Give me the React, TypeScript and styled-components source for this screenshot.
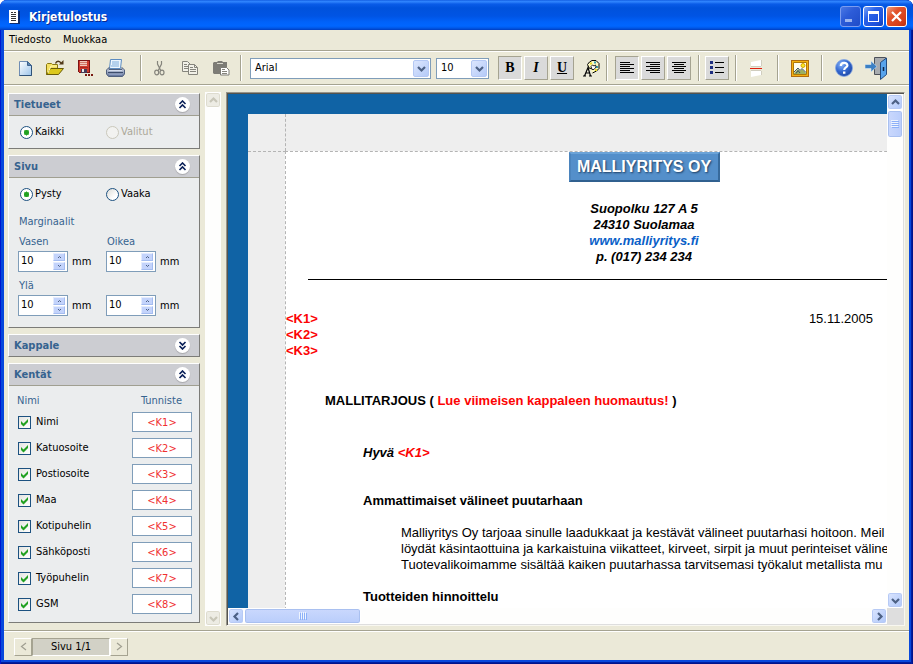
import React from "react";
import styled, { createGlobalStyle, css } from "styled-components";

const uiFont = `"DejaVu Sans Condensed", "Noto Sans", sans-serif`;
const docFont = `"Liberation Sans", Arial, sans-serif`;

const GlobalStyle = createGlobalStyle`
  * { box-sizing: border-box; }
  html, body { margin: 0; height: 100%; background: #fff; }
  body { font: 11px/16px ${uiFont}; color: #000; }
  button, input, select { font: inherit; color: inherit; margin: 0; }
  button { padding: 0; border: 0; background: none; }
  svg { display: block; flex: none; }
`;

/* ---------- window frame ---------- */

const Window = styled.div`
  display: flex;
  flex-direction: column;
  height: 100vh;
  overflow: hidden;
  background: #0848dc;
  border-radius: 7px 7px 0 0;
  box-shadow: inset 1px 0 #0019cf, inset -1px 0 #00138c, inset -2px 0 #001ea0, inset 0 -1px #00138c, inset 0 -2px #001ea0;
`;

const TitleBar = styled.header`
  display: flex;
  align-items: center;
  flex: none;
  height: 30px;
  padding: 3px 6px 0 8px;
  gap: 2px;
  background: linear-gradient(
    #0a50d8 0, #2f86ff 1px, #2c7ffa 2px, #0a5ce8 4px, #0052dc 8px,
    #0054e4 16px, #0062fa 22px, #0066ff 26px, #0058e8 28px, #003dc0 30px
  );
`;

const Title = styled.h1`
  flex: 1;
  margin: 0 0 0 7px;
  font: bold 12px/16px ${uiFont};
  color: #fff;
  text-shadow: 1px 1px #0a2a90;
`;

const CaptionButton = styled.button<{ $tone: "dim" | "blue" | "red" }>`
  display: grid;
  place-items: center;
  width: 21px;
  height: 21px;
  border: 1px solid ${p => (p.$tone === "dim" ? "#7b9cf0" : "#fff")};
  border-radius: 3px;
  background: ${p =>
    p.$tone === "red"
      ? "linear-gradient(135deg, #f0a080 0, #e2532c 35%, #d8401a 75%, #b83010)"
      : p.$tone === "blue"
      ? "linear-gradient(135deg, #7aa4f8 0, #2a62e8 35%, #1d52dc 75%, #1040b8)"
      : "linear-gradient(135deg, #4a78e4 0, #2d5cd8 40%, #1e4cc8)"};
`;

const Client = styled.div`
  display: flex;
  flex-direction: column;
  flex: 1;
  min-height: 0;
  margin: 0 4px 4px;
  background: #ebe9d8;
`;

const MenuBar = styled.nav`
  display: flex;
  flex: none;
  height: 21px;
  padding: 1px 5px 0;
  gap: 12px;
  border-bottom: 1px solid #a5a391;
`;

const MenuItem = styled.button`
  height: 17px;
`;

/* ---------- toolbar ---------- */

const Toolbar = styled.div`
  display: flex;
  align-items: center;
  flex: none;
  height: 34px;
  padding-left: 6px;
  border-top: 1px solid #fff;
  border-bottom: 1px solid #a5a391;
`;

const Group = styled.div<{ $gap?: number; $before?: number; $after?: number }>`
  display: flex;
  align-items: center;
  gap: ${p => p.$gap ?? 0}px;
  padding: 0 ${p => p.$after ?? 0}px 0 ${p => p.$before ?? 0}px;
`;

const Separator = styled.span`
  flex: none;
  width: 2px;
  height: 26px;
  border-left: 1px solid #a5a391;
  border-right: 1px solid #fff;
`;

const IconButton = styled.button`
  display: grid;
  place-items: center;
  flex: none;
  width: 30px;
  height: 24px;
`;

const ToggleButton = styled.button<{ $on?: boolean }>`
  display: grid;
  place-items: center;
  flex: none;
  width: 24px;
  height: 24px;
  background: #dadada;
  border: 1px solid;
  border-color: ${p => (p.$on ? "#a5a391 #fff #fff #a5a391" : "#fff #a5a391 #a5a391 #fff")};
  font: bold 14px/16px "Liberation Serif", serif;
`;

const SelectBox = styled.span<{ $width: number }>`
  display: grid;
  grid-template-columns: 1fr 17px;
  align-items: center;
  flex: none;
  width: ${p => p.$width}px;
  height: 21px;
  background: #fff;
  border: 1px solid #7f9db9;
`;

const Select = styled.select`
  grid-area: 1 / 1 / 2 / 3;
  width: 100%;
  height: 19px;
  padding: 0 4px;
  border: 0;
  appearance: none;
  background: none;
`;

const SelectArrow = styled.span`
  grid-area: 1 / 2;
  display: grid;
  place-items: center;
  width: 16px;
  height: 17px;
  border: 1px solid #b4c8f4;
  border-radius: 2px;
  background: linear-gradient(135deg, #dce6fe, #b4caf8);
  pointer-events: none;
`;

/* ---------- work area ---------- */

const WorkArea = styled.main`
  display: flex;
  flex: 1;
  min-height: 0;
  padding: 7px 4px 4px;
  border-top: 1px solid #fff;
`;

const Sidebar = styled.aside`
  display: flex;
  flex-direction: column;
  flex: none;
  width: 192px;
  gap: 6px;
`;

const Panel = styled.section`
  flex: none;
  border: 1px solid;
  border-color: #fff #7c7c78 #7c7c78 #fff;
  background: #ebedee;
`;

const PanelHead = styled.h2<{ $open: boolean }>`
  display: flex;
  align-items: center;
  justify-content: space-between;
  height: ${p => (p.$open ? 22 : 21)}px;
  margin: 0;
  padding: 0 9px 0 5px;
  background: #cccdd2;
  ${p => p.$open && css`border-bottom: 1px solid #a09f91;`}
  font: bold 11px/16px ${uiFont};
  color: #36638f;
`;

const RoundButton = styled.button`
  display: grid;
  place-items: center;
  width: 15px;
  height: 15px;
  border-radius: 50%;
  background: #fff;
  box-shadow: 0 1px 1px #a8a8ac;
`;

const RadioRow = styled.div`
  display: grid;
  grid-template-columns: 86px 1fr;
  align-items: center;
  height: 32px;
  padding-left: 11px;
`;

const RadioLabel = styled.label<{ $disabled?: boolean }>`
  display: flex;
  align-items: center;
  gap: 2px;
  color: ${p => (p.$disabled ? "#aca899" : "#000")};
`;

const Radio = styled.input`
  appearance: none;
  width: 13px;
  height: 13px;
  border: 1px solid #1c5180;
  border-radius: 50%;
  background: linear-gradient(135deg, #dcdcd7, #fff 70%);
  &:checked { background: radial-gradient(circle, #21a121 0 2px, #8fd48f 3px, #fff 3px); }
  &:disabled { border-color: #cac8bb; background: #f2f2f0; }
`;

const Margins = styled.fieldset`
  display: grid;
  grid-template-columns: 88px 1fr;
  row-gap: 1px;
  margin: 0;
  padding: 0 0 6px 9px;
  border: 0;
  color: #36638f;
`;

const Legend = styled.legend`
  padding: 4px 0 0 1px;
  height: 24px;
`;

const Field = styled.label`
  display: flex;
  flex-direction: column;
  height: 43px;
`;

const FieldCaption = styled.span`
  height: 17px;
  padding-left: 1px;
`;

const FieldLine = styled.span`
  display: flex;
  align-items: center;
  gap: 4px;
  color: #000;
`;

const SpinBox = styled.span`
  display: flex;
  align-items: center;
  width: 50px;
  height: 21px;
  padding-right: 2px;
  background: #fff;
  border: 1px solid #7f9db9;
`;

const SpinInput = styled.input`
  flex: 1;
  min-width: 0;
  height: 19px;
  padding: 0 0 2px 2px;
  border: 0;
  background: none;
`;

const SpinButtons = styled.span`
  display: flex;
  flex-direction: column;
  gap: 1px;
`;

const SpinButton = styled.button`
  display: grid;
  place-items: center;
  width: 12px;
  height: 8px;
  background: #c3d3fb;
  border: 1px solid;
  border-color: #e4ecfe #a4bcf0 #a4bcf0 #e4ecfe;
`;

const FieldTable = styled.table`
  width: 100%;
  border-collapse: collapse;
  margin: 6px 0 5px;
  th, td { padding: 0 7px 0 9px; height: 26px; text-align: left; font-weight: normal; }
  th { height: 17px; padding-left: 8px; color: #36638f; }
  th + th { padding: 0 17px 0 0; text-align: right; }
  td + td { width: 67px; padding-left: 0; }
`;

const CheckLabel = styled.label`
  display: flex;
  align-items: center;
  gap: 5px;
`;

const CheckCell = styled.span`
  display: grid;
  place-items: center;
  > * { grid-area: 1 / 1; }
  svg { pointer-events: none; }
`;

const CheckBox = styled.input`
  appearance: none;
  width: 13px;
  height: 13px;
  background: linear-gradient(135deg, #e4e4e0, #fff);
  border: 1px solid #1c5180;
  &:not(:checked) + svg { visibility: hidden; }
`;

const CodeInput = styled.input`
  display: block;
  width: 60px;
  height: 20px;
  padding: 0;
  border: 1px solid #7f9db9;
  background: #fff;
  text-align: center;
  color: #f03030;
`;

/* ---------- scroll bars ---------- */

const ScrollBar = styled.div<{ $dir: "column" | "row" }>`
  display: flex;
  flex-direction: ${p => p.$dir};
  flex: none;
  ${p => (p.$dir === "column" ? "width: 16px;" : "height: 16px;")}
  background: #fefefd;
`;

const ScrollButton = styled.button`
  display: grid;
  place-items: center;
  flex: none;
  width: 16px;
  height: 16px;
  border: 1px solid #fff;
  border-radius: 3px;
  background: linear-gradient(135deg, #dbe5fe, #b0c8fa);
  box-shadow: inset 0 0 0 1px #b7caf5;
  &:disabled { background: #edece4; box-shadow: inset 0 0 0 1px #dedccf; }
`;

const Thumb = styled.div<{ $dir: "column" | "row" }>`
  display: grid;
  place-items: center;
  flex: none;
  ${p => (p.$dir === "column" ? "height: 28px;" : "width: 117px;")}
  border: 1px solid #fff;
  border-radius: 3px;
  background: linear-gradient(${p => (p.$dir === "column" ? "90deg" : "180deg")}, #cad8fd, #b9cdfb);
  box-shadow: inset 0 0 0 1px #a9c0f0;
`;

const Spacer = styled.span`
  flex: 1;
`;

const SideScroll = styled(ScrollBar)`
  margin: -1px 5px 0;
`;

/* ---------- letter preview ---------- */

const Preview = styled.div`
  display: grid;
  grid-template: minmax(0, 1fr) 16px / minmax(0, 1fr) 16px;
  flex: 1;
  min-width: 0;
  margin-top: -1px;
  padding: 1px;
  border: 1px solid;
  border-color: #96948a #f8f7f0 #f8f7f0 #96948a;
  background: #dedede;
  box-shadow: inset 1px 1px #55544e;
`;

const Canvas = styled.div`
  overflow: hidden;
  padding: 20px 0 0 20px;
  background: #1063a5;
`;

const Paper = styled.article`
  width: 794px;
  min-height: 1100px;
  padding: 37px 0 0 37px;
  background: linear-gradient(#eee, #eee);
  font: 13px/16px ${docFont};
`;

const PrintArea = styled.div`
  width: 717px;
  min-height: 1000px;
  background: #fff;
  border-top: 1px dashed #b4b4b4;
  border-left: 1px dashed #b4b4b4;
`;

const Guides = styled.div`
  display: grid;
  grid-template-columns: 37px 1fr;
  height: 37px;
  margin: -37px 0 0 -37px;
`;

const GuideMark = styled.span`
  border-right: 1px dashed #b4b4b4;
  margin-right: -1px;
`;

const GuideEdge = styled.div`
  width: 38px;
  height: 1px;
  margin: 0 0 -1px -37px;
  border-top: 1px dashed #b4b4b4;
`;

const Letterhead = styled.div`
  display: flex;
  flex-direction: column;
  align-items: center;
`;

const Logo = styled.div`
  margin-bottom: 19px;
  width: 151px;
  border: 2px solid;
  border-color: #6ba3d8 #376a9c #30608f #4b84bd;
  background: #548fca;
  font: bold 16px/26px ${docFont};
  text-align: center;
  white-space: nowrap;
  color: #fff;
  text-shadow: 1px 1px 2px #1c3c60;
`;

const Address = styled.address`
  font: italic bold 13px/16px ${docFont};
  text-align: center;
`;

const SiteLink = styled.a`
  color: #0a5fc8;
  text-decoration: none;
`;

const Rule = styled.hr`
  height: 1px;
  margin: 14px 0 31px 22px;
  border: 0;
  background: #000;
`;

const Recipient = styled.div`
  display: flex;
  justify-content: space-between;
  padding-right: 129px;
`;

const Red = styled.span`
  color: #fc0404;
  font-weight: bold;
`;

const Line = styled.p<{ $indent: number; $top: number; $bold?: boolean; $italic?: boolean }>`
  margin: ${p => p.$top}px 0 0 ${p => p.$indent * 38 + 1}px;
  white-space: nowrap;
  font-weight: ${p => (p.$bold ? "bold" : "normal")};
  font-style: ${p => (p.$italic ? "italic" : "normal")};
`;

/* ---------- status bar ---------- */

const StatusBar = styled.footer`
  display: flex;
  align-items: center;
  flex: none;
  height: 30px;
  padding: 2px 0 0 10px;
  border-top: 1px solid #a5a391;
  box-shadow: inset 0 1px #fff;
`;

const PageButton = styled.button`
  display: grid;
  place-items: center;
  width: 18px;
  height: 18px;
  border: 1px solid;
  border-color: #fff #a5a391 #a5a391 #fff;
`;

const PageLabel = styled.output`
  width: 78px;
  height: 18px;
  border: 1px solid;
  border-color: #a5a391 #fff #fff #a5a391;
  background: #d2d1c6;
  text-align: center;
`;

/* ---------- icons ---------- */

const Chevron = ({ dir, color = "#4d6185" }: { dir: "up" | "down" | "left" | "right"; color?: string }) => {
  const d = {
    up: "M1 6 4.500 2.500 8 6",
    down: "M1 3 4.500 6.500 8 3",
    left: "M6 1 2.500 4.500 6 8",
    right: "M3 1 6.500 4.500 3 8",
  }[dir];
  return (
    <svg width="9" height="9" viewBox="0 0 9 9" fill="none" stroke={color} strokeWidth="2.200">
      <path d={d} />
    </svg>
  );
};

const ThinChevron = ({ dir }: { dir: "left" | "right" }) => (
  <svg width="7" height="9" viewBox="0 0 7 9" fill="none" stroke="#a09f91" strokeWidth="1.200">
    <path d={dir === "left" ? "M6 1 1.500 4.500 6 8" : "M1 1 5.500 4.500 1 8"} />
  </svg>
);

const DoubleChevron = ({ up }: { up: boolean }) => (
  <svg width="9" height="9" viewBox="0 0 9 9" fill="none" stroke="#0a2058" strokeWidth="1.600">
    <path d={up ? "M1.500 4 4.500 1 7.500 4M1.500 8 4.500 5 7.500 8" : "M1.500 1 4.500 4 7.500 1M1.500 5 4.500 8 7.500 5"} />
  </svg>
);

const SpinArrow = ({ up }: { up: boolean }) => (
  <svg width="5" height="4" viewBox="0 0 5 4" fill="none" stroke="#4d6185">
    <path d={up ? "M1 3 2.500 1.500 4 3" : "M1 1 2.500 2.500 4 1"} />
  </svg>
);

const Tick = () => (
  <svg width="9" height="9" viewBox="0 0 9 9" fill="#21a121">
    <path d="M1 3v3l2.500 2.500L8 4V1L3.500 5.500z" />
  </svg>
);

const Grip = ({ vertical }: { vertical?: boolean }) => (
  <svg width="8" height="8" viewBox="0 0 8 8" shapeRendering="crispEdges">
    {[0, 2, 4, 6].map(n =>
      vertical ? (
        <g key={n}>
          <path d={`M0 ${n}h7v1H0z`} fill="#eef4fe" />
          <path d={`M1 ${n + 1}h7v1H1z`} fill="#8cb0f8" />
        </g>
      ) : (
        <g key={n}>
          <path d={`M${n} 0h1v7h-1z`} fill="#eef4fe" />
          <path d={`M${n + 1} 1h1v7h-1z`} fill="#8cb0f8" />
        </g>
      )
    )}
  </svg>
);

const AppIcon = () => (
  <svg width="12" height="14" viewBox="0 0 12 14" shapeRendering="crispEdges">
    <path d="M2 1h10v13H2z" fill="#0c2c70" />
    <path d="M1 0h9v13H1z" fill="#fff" />
    <path d="M3 2h2v1H3zM6 2h2v1H6zM3 4h5v1H3zM3 6h5v1H3zM3 8h5v1H3zM3 10h5v1H3z" fill="#333" />
  </svg>
);

const NewIcon = () => (
  <svg width="13" height="15" viewBox="0 0 13 15">
    <defs>
      <linearGradient id="sheet" x1="0" y1="0" x2="1" y2="1">
        <stop offset="0" stopColor="#fff" />
        <stop offset="1" stopColor="#9cc4ea" />
      </linearGradient>
    </defs>
    <path d="M.5.5h8l4 4v10H.5z" fill="url(#sheet)" stroke="#6f8db4" />
    <path d="M12.500 4.500v10H.5" fill="none" stroke="#2f5278" />
    <path d="M8.500.5v4h4z" fill="#5c86b4" stroke="#3e638e" />
  </svg>
);

const OpenIcon = () => (
  <svg width="18" height="16" viewBox="0 0 18 16">
    <path d="M.5 14.500v-10l1-1h4l1 1h5v4" fill="#f4e060" stroke="#8a7810" />
    <path d="M.5 14.500 4.500 8.500h13l-5 6z" fill="#dcc81c" stroke="#6a5c08" />
    <path d="M2 13 5 6h6" fill="none" stroke="#fff8b0" />
    <path d="M9.500 3.500c1-3 4-3 6 0" fill="none" stroke="#503818" strokeWidth="1.300" />
    <path d="M13 4.500h4.500V0z" fill="#503818" />
  </svg>
);

const SaveIcon = () => (
  <svg width="15" height="17" viewBox="0 0 15 17" shapeRendering="crispEdges">
    <path d="M0 0h12v13H1l-1-1z" fill="#7c1414" />
    <path d="M1 1h10v11H1z" fill="#d03a2c" />
    <path d="M2 1h7v5H2z" fill="#f2c8bc" />
    <path d="M2 2h7v1H2zM2 4h7v1H2z" fill="#d07868" />
    <path d="M2 7h8v1H2z" fill="#a82820" />
    <path d="M3 9h6v4H3z" fill="#443c58" />
    <path d="M4 9h2v3H4z" fill="#e8e8e8" />
    <path d="M7 14h2v2H7zM10 14h2v2h-2zM13 14h2v2h-2z" fill="#781810" />
  </svg>
);

const PrintIcon = () => (
  <svg width="19" height="18" viewBox="0 0 19 18">
    <defs>
      <linearGradient id="printer" x1="0" y1="0" x2="0" y2="1">
        <stop offset="0" stopColor="#dce2ee" />
        <stop offset="1" stopColor="#5c6e96" />
      </linearGradient>
    </defs>
    <path d="M4.500.5h11l-1 9h-11z" fill="#ecf6ff" stroke="#5d8cc0" />
    <path d="M6 3h7M6 5h7M5 7h8" stroke="#7cacdc" />
    <path d="M3 8.500.5 11v4l2 2.500h14l2-2.500v-4L16 8.500v2H3z" fill="url(#printer)" stroke="#50607e" />
    <path d="M2 13.500h15" stroke="#3c4c6c" />
    <path d="M3 11.500h13" stroke="#d4dcec" />
    <path d="M3 15.500h13" stroke="#8c9cc0" />
  </svg>
);

const CutIcon = () => (
  <svg width="11" height="15" viewBox="0 0 11 15" fill="none" stroke="#85847c" strokeWidth="1.200">
    <path d="M3.500 0v3L7 10M7.500 0v3L4 10" />
    <ellipse cx="2.700" cy="11.500" rx="2" ry="2.300" />
    <ellipse cx="8" cy="11.500" rx="2" ry="2.300" />
  </svg>
);

const CopyIcon = () => (
  <svg width="16" height="14" viewBox="0 0 16 14" stroke="#85847c">
    <path d="M.5.5h5l3 3v7h-8z" fill="#f2f1e8" />
    <path d="M2 3.500h3M2 5.500h4M2 7.500h4" />
    <path d="M6.500 3.500h6l3 3v7h-9z" fill="#f2f1e8" />
    <path d="M8 6.500h3M8 8.500h6M8 10.500h6M12.500 3.500v3h3" fill="none" />
  </svg>
);

const PasteIcon = () => (
  <svg width="17" height="15" viewBox="0 0 17 15">
    <path d="M1 1h3l1-1h4l1 1h4v12H1L0 12V2z" fill="#7d7c76" />
    <path d="M4 2.500h6" stroke="#d8d7cc" />
    <path d="M7.500 6.500h6l2.500 2.500v5h-8.500z" fill="#fff" stroke="#7d7c76" />
    <path d="M9 8.500h3M9 10.500h5M9 12.500h5" stroke="#85847c" />
  </svg>
);

const PaletteIcon = () => (
  <svg width="17" height="17" viewBox="0 0 17 17">
    <path d="M4.500 4.500 6.500 2 9 .5h4L16 3.500v5L13.500 11 9.500 13" fill="#fbf8c0" stroke="#000" />
    <path d="M4.500 4.500 6 8l4 1" fill="#fbf8c0" stroke="#000" />
    <path d="M7 2.500h2v2H7zM12 9h2v2h-2z" fill="#e8d820" />
    <path d="M11 1.500h2v2h-2zM13 6h2v2h-2z" fill="#38a0b0" />
    <path d="M8 6.500 9.500 5l1.500 1 1.500-1L13 7l-2 2.500H9z" fill="#fff" stroke="#111" strokeWidth=".9" />
    <path d="M1.500 16 5 7.500 7.500 16M3 13h4M0 16h3M6 16h3" fill="none" stroke="#000" strokeWidth="1.200" />
  </svg>
);

const alignments = {
  left: [[0, 10], [0, 14], [0, 10], [0, 14], [0, 10], [0, 14]],
  right: [[0, 14], [4, 10], [0, 14], [4, 10], [0, 14], [4, 10]],
  center: [[0, 14], [2, 10], [0, 14], [2, 10], [0, 14], [2, 10]],
};

const AlignIcon = ({ kind }: { kind: keyof typeof alignments }) => (
  <svg width="14" height="12" viewBox="0 0 14 12" shapeRendering="crispEdges">
    {alignments[kind].map(([x, w], i) => (
      <rect key={i} x={x} y={i * 2} width={w} height="1" />
    ))}
  </svg>
);

const ListIcon = () => (
  <svg width="14" height="14" viewBox="0 0 14 14" shapeRendering="crispEdges">
    <path d="M0 0h3v3H0zM0 5h3v3H0zM0 10h3v3H0z" fill="#1c2c80" />
    <path d="M5 1h9v1H5zM5 6h9v1H5zM5 11h9v1H5z" />
  </svg>
);

const BreakIcon = () => (
  <svg width="12" height="17" viewBox="0 0 12 17">
    <path d="M1 2 11 0v6H1zM1 11h10v4L1 17z" fill="#fff" />
    <path d="M1 6.500h10M1 10.500h10M11.500 0v6M11.500 11v4" stroke="#c4c2b4" strokeWidth=".7" />
    <path d="M0 8.500h12" stroke="#e02010" />
  </svg>
);

const ImageIcon = () => (
  <svg width="18" height="17" viewBox="0 0 18 17">
    <path d="M0 0h18v17H0z" fill="#b06c10" />
    <path d="M1 1h16v15H1z" fill="#f4b010" />
    <path d="M2.500 2.500h13v12h-13z" fill="#fffdf0" stroke="#b07808" />
    <circle cx="12" cy="5.500" r="2" fill="#f8e820" stroke="#d8a010" />
    <path d="M3 13 7 9l2 2 2-2 4 4v1H3z" fill="#9cb060" />
    <path d="M3 12 7 8l2 2.500L11 8.500l4 4M5 13.500l2-3 2 2.500" fill="none" stroke="#3c5068" />
  </svg>
);

const HelpIcon = () => (
  <svg width="18" height="18" viewBox="0 0 18 18">
    <defs>
      <radialGradient id="orb" cx=".35" cy=".3" r=".8">
        <stop offset="0" stopColor="#88b4f8" />
        <stop offset=".5" stopColor="#3468d0" />
        <stop offset="1" stopColor="#1c44a0" />
      </radialGradient>
    </defs>
    <circle cx="9" cy="9" r="8.500" fill="url(#orb)" stroke="#86a8e4" strokeWidth=".8" />
    <path d="M5.800 7c0-4 6.600-4 6.600-.6C12.400 8.500 9.200 8.500 9.200 11" fill="none" stroke="#fff" strokeWidth="2.200" />
    <path d="M8 12.500h2.400v2.300H8z" fill="#fff" />
  </svg>
);

const ExitIcon = () => (
  <svg width="22" height="24" viewBox="0 0 22 24">
    <path d="M9.500 1.500h11v17h-11z" fill="#a8acb0" stroke="#4c5058" />
    <path d="M15.500 6.500 21.500 2v16.500l-6 5z" fill="#58a4ec" stroke="#244c80" />
    <path d="M18.500 11v4" stroke="#102848" strokeWidth="1.500" />
    <path d="M0 8.500h6V5l6 5.500L6 16v-3.500H0z" fill="#3c80c4" stroke="#d8e8f4" strokeWidth=".6" />
  </svg>
);

const MinimizeIcon = () => (
  <svg width="15" height="15" viewBox="0 0 15 15"><path d="M2 10h7v3H2z" fill="#9ab4f0" /></svg>
);
const MaximizeIcon = () => (
  <svg width="13" height="13" viewBox="0 0 13 13" shapeRendering="crispEdges">
    <path d="M1 1h11v11H1zM2 4v7h9V4z" fill="#fff" fillRule="evenodd" />
  </svg>
);
const CloseIcon = () => (
  <svg width="13" height="13" viewBox="0 0 13 13"><path d="m2 2 9 9M11 2 2 11" stroke="#fff" strokeWidth="2.200" /></svg>
);

/* ---------- parts ---------- */

const Dropdown = ({ label, value, width }: { label: string; value: string; width: number }) => (
  <SelectBox $width={width}>
    <Select aria-label={label} defaultValue={value}>
      <option>{value}</option>
    </Select>
    <SelectArrow><Chevron dir="down" /></SelectArrow>
  </SelectBox>
);

const Section = ({ title, open = true, children }: { title: string; open?: boolean; children?: React.ReactNode }) => (
  <Panel>
    <PanelHead $open={open}>
      {title}
      <RoundButton aria-label={title} aria-expanded={open}><DoubleChevron up={open} /></RoundButton>
    </PanelHead>
    {children}
  </Panel>
);

const MarginField = ({ caption, label }: { caption: string; label: string }) => (
  <Field>
    <FieldCaption>{caption}</FieldCaption>
    <FieldLine>
      <SpinBox>
        <SpinInput defaultValue="10" aria-label={label} />
        <SpinButtons>
          <SpinButton aria-label="+"><SpinArrow up /></SpinButton>
          <SpinButton aria-label="-"><SpinArrow up={false} /></SpinButton>
        </SpinButtons>
      </SpinBox>
      mm
    </FieldLine>
  </Field>
);

const fields = ["Nimi", "Katuosoite", "Postiosoite", "Maa", "Kotipuhelin", "Sähköposti", "Työpuhelin", "GSM"];

export default function App() {
  return (
    <>
      <GlobalStyle />
      <Window>
        <TitleBar>
          <AppIcon />
          <Title>Kirjetulostus</Title>
          <CaptionButton $tone="dim" aria-label="Pienennä"><MinimizeIcon /></CaptionButton>
          <CaptionButton $tone="blue" aria-label="Suurenna"><MaximizeIcon /></CaptionButton>
          <CaptionButton $tone="red" aria-label="Sulje"><CloseIcon /></CaptionButton>
        </TitleBar>
        <Client>
          <MenuBar>
            <MenuItem>Tiedosto</MenuItem>
            <MenuItem>Muokkaa</MenuItem>
          </MenuBar>
          <Toolbar>
            <Group $after={10}>
              <IconButton aria-label="Uusi"><NewIcon /></IconButton>
              <IconButton aria-label="Avaa"><OpenIcon /></IconButton>
              <IconButton aria-label="Tallenna"><SaveIcon /></IconButton>
              <IconButton aria-label="Tulosta"><PrintIcon /></IconButton>
            </Group>
            <Separator />
            <Group $gap={1} $before={2} $after={4}>
              <IconButton aria-label="Leikkaa" disabled><CutIcon /></IconButton>
              <IconButton aria-label="Kopioi" disabled><CopyIcon /></IconButton>
              <IconButton aria-label="Liitä" disabled><PasteIcon /></IconButton>
            </Group>
            <Separator />
            <Group $gap={5} $before={8} $after={9}>
              <Dropdown label="Fontti" value="Arial" width={181} />
              <Dropdown label="Koko" value="10" width={53} />
            </Group>
            <Group $gap={2}>
              <ToggleButton $on aria-label="Lihavointi">B</ToggleButton>
              <ToggleButton aria-label="Kursivointi"><i>I</i></ToggleButton>
              <ToggleButton aria-label="Alleviivaus"><u>U</u></ToggleButton>
              <IconButton aria-label="Väri"><PaletteIcon /></IconButton>
            </Group>
            <Separator />
            <Group $gap={2} $before={7} $after={7}>
              <ToggleButton $on aria-label="Vasen"><AlignIcon kind="left" /></ToggleButton>
              <ToggleButton aria-label="Oikea"><AlignIcon kind="right" /></ToggleButton>
              <ToggleButton aria-label="Keskitys"><AlignIcon kind="center" /></ToggleButton>
            </Group>
            <Separator />
            <Group $before={5} $after={6}>
              <ToggleButton aria-label="Luettelo"><ListIcon /></ToggleButton>
            </Group>
            <Separator />
            <Group $before={4} $after={6}>
              <IconButton aria-label="Sivunvaihto"><BreakIcon /></IconButton>
            </Group>
            <Separator />
            <Group $before={6} $after={6}>
              <IconButton aria-label="Kuva"><ImageIcon /></IconButton>
            </Group>
            <Separator />
            <Group $before={6} $gap={2}>
              <IconButton aria-label="Ohje"><HelpIcon /></IconButton>
              <IconButton aria-label="Poistu"><ExitIcon /></IconButton>
            </Group>
          </Toolbar>

          <WorkArea>
            <Sidebar>
              <Section title="Tietueet">
                <RadioRow>
                  <RadioLabel><Radio type="radio" name="records" defaultChecked />Kaikki</RadioLabel>
                  <RadioLabel $disabled><Radio type="radio" name="records" disabled />Valitut</RadioLabel>
                </RadioRow>
              </Section>
              <Section title="Sivu">
                <RadioRow>
                  <RadioLabel><Radio type="radio" name="orientation" defaultChecked />Pysty</RadioLabel>
                  <RadioLabel><Radio type="radio" name="orientation" />Vaaka</RadioLabel>
                </RadioRow>
                <Margins>
                  <Legend>Marginaalit</Legend>
                  <MarginField caption="Vasen" label="Vasen" />
                  <MarginField caption="Oikea" label="Oikea" />
                  <MarginField caption="Ylä" label="Ylä" />
                  <MarginField caption="" label="Ala" />
                </Margins>
              </Section>
              <Section title="Kappale" open={false} />
              <Section title="Kentät">
                <FieldTable>
                  <thead>
                    <tr><th>Nimi</th><th>Tunniste</th></tr>
                  </thead>
                  <tbody>
                    {fields.map((name, i) => (
                      <tr key={name}>
                        <td>
                          <CheckLabel>
                            <CheckCell><CheckBox type="checkbox" defaultChecked /><Tick /></CheckCell>
                            {name}
                          </CheckLabel>
                        </td>
                        <td><CodeInput aria-label={name} defaultValue={`<K${i + 1}>`} /></td>
                      </tr>
                    ))}
                  </tbody>
                </FieldTable>
              </Section>
            </Sidebar>

            <SideScroll $dir="column">
              <ScrollButton disabled aria-label="Ylös"><Chevron dir="up" color="#c8c6b8" /></ScrollButton>
              <Spacer />
              <ScrollButton disabled aria-label="Alas"><Chevron dir="down" color="#c8c6b8" /></ScrollButton>
            </SideScroll>

            <Preview>
              <Canvas>
                <Paper>
                  <Guides><GuideMark /></Guides>
                  <GuideEdge />
                  <PrintArea>
                    <Letterhead>
                      <Logo>MALLIYRITYS OY</Logo>
                      <Address>
                        Suopolku 127 A 5<br />
                        24310 Suolamaa<br />
                        <SiteLink href="#">www.malliyritys.fi</SiteLink><br />
                        p. (017) 234 234
                      </Address>
                    </Letterhead>
                    <Rule />
                    <Recipient>
                      <Red>&lt;K1&gt;<br />&lt;K2&gt;<br />&lt;K3&gt;</Red>
                      <time>15.11.2005</time>
                    </Recipient>
                    <Line $indent={1} $top={34} $bold>
                      MALLITARJOUS ( <Red>Lue viimeisen kappaleen huomautus!</Red> )
                    </Line>
                    <Line $indent={2} $top={36} $bold $italic>Hyvä <Red>&lt;K1&gt;</Red></Line>
                    <Line $indent={2} $top={32} $bold>Ammattimaiset välineet puutarhaan</Line>
                    <Line $indent={3} $top={16}>
                      Malliyritys Oy tarjoaa sinulle laadukkaat ja kestävät välineet puutarhasi hoitoon. Meil<br />
                      löydät käsintaottuina ja karkaistuina viikatteet, kirveet, sirpit ja muut perinteiset väline<br />
                      Tuotevalikoimamme sisältää kaiken puutarhassa tarvitsemasi työkalut metallista mu
                    </Line>
                    <Line $indent={2} $top={16} $bold>Tuotteiden hinnoittelu</Line>
                  </PrintArea>
                </Paper>
              </Canvas>
              <ScrollBar $dir="column">
                <ScrollButton aria-label="Ylös"><Chevron dir="up" /></ScrollButton>
                <Thumb $dir="column"><Grip vertical /></Thumb>
                <Spacer />
                <ScrollButton aria-label="Alas"><Chevron dir="down" /></ScrollButton>
              </ScrollBar>
              <ScrollBar $dir="row">
                <ScrollButton aria-label="Vasemmalle"><Chevron dir="left" /></ScrollButton>
                <Thumb $dir="row"><Grip /></Thumb>
                <Spacer />
                <ScrollButton aria-label="Oikealle"><Chevron dir="right" /></ScrollButton>
              </ScrollBar>
            </Preview>
          </WorkArea>

          <StatusBar>
            <PageButton aria-label="Edellinen sivu" disabled><ThinChevron dir="left" /></PageButton>
            <PageLabel>Sivu 1/1</PageLabel>
            <PageButton aria-label="Seuraava sivu" disabled><ThinChevron dir="right" /></PageButton>
          </StatusBar>
        </Client>
      </Window>
    </>
  );
}
